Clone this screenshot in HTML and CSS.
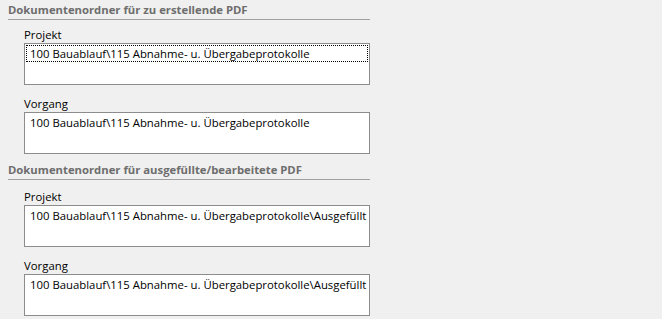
FILE: index.html
```html
<!DOCTYPE html>
<html lang="de">
<head>
    <meta charset="UTF-8">
    <title>Dokumentenordner</title>
    <link rel="stylesheet" href="styles.css">
</head>
<body>
    <div class="settings">
        <section class="group first">
            <h2 class="group-title">Dokumentenordner für zu erstellende PDF</h2>
            <div class="field">
                <label>Projekt</label>
                <div class="box focused"><span class="value">100 Bauablauf\115 Abnahme- u. Übergabeprotokolle</span></div>
            </div>
            <div class="field">
                <label>Vorgang</label>
                <div class="box"><span class="value">100 Bauablauf\115 Abnahme- u. Übergabeprotokolle</span></div>
            </div>
        </section>

        <section class="group">
            <h2 class="group-title">Dokumentenordner für ausgefüllte/bearbeitete PDF</h2>
            <div class="field">
                <label>Projekt</label>
                <div class="box"><span class="value">100 Bauablauf\115 Abnahme- u. Übergabeprotokolle\Ausgefüllt</span></div>
            </div>
            <div class="field">
                <label>Vorgang</label>
                <div class="box"><span class="value">100 Bauablauf\115 Abnahme- u. Übergabeprotokolle\Ausgefüllt</span></div>
            </div>
        </section>
    </div>
</body>
</html>
```

FILE: styles.css
```css
body { margin: 0; background: #f0f0f0; font-family: "Segoe UI", "Open Sans", "Noto Sans", sans-serif; font-size: 11.35px; color: #000; }
.settings { width: 362px; padding: 2px 0 0 8px; }
.group + .group { margin-top: 8px; }
.group-title { margin: 0; font-size: 11.3px; font-weight: bold; line-height: 16px; color: #6d6d6d; border-bottom: 1px solid #a0a0a0; padding-bottom: 1px; }
.field { margin-left: 16px; margin-top: 10px; }
.group .field:first-of-type { margin-top: 8px; }
.group.first .field:first-of-type { margin-top: 6px; }
.field label { display: block; line-height: 17px; }
.box { height: 38px; background: #fff; border: 1px solid #8c8c8c; padding: 1px; }
.value { display: block; line-height: 15px; padding: 0 3px; border: 1px dotted transparent; white-space: nowrap; overflow: hidden; }
.box.focused .value { border-color: #000; }
```
